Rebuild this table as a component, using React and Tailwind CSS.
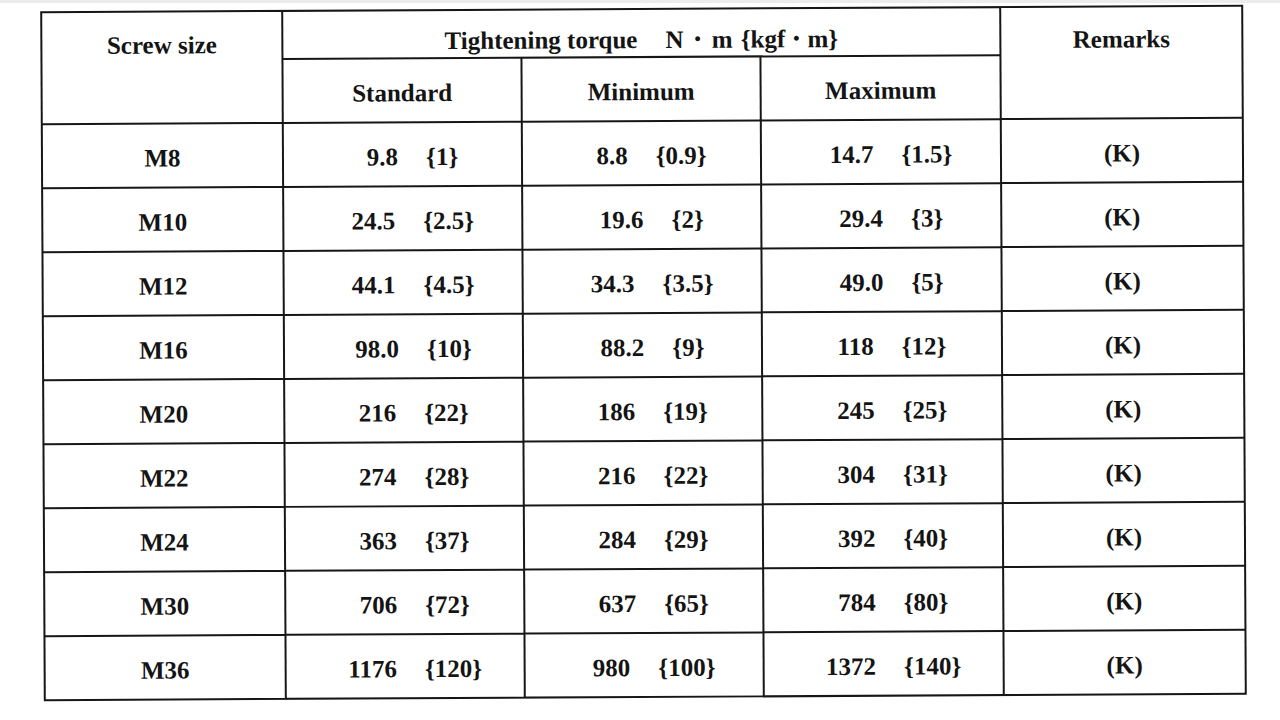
import React from 'react';

const rows = [
  { size: 'M8', std: ['9.8', '{1}'], min: ['8.8', '{0.9}'], max: ['14.7', '{1.5}'] },
  { size: 'M10', std: ['24.5', '{2.5}'], min: ['19.6', '{2}'], max: ['29.4', '{3}'] },
  { size: 'M12', std: ['44.1', '{4.5}'], min: ['34.3', '{3.5}'], max: ['49.0', '{5}'] },
  { size: 'M16', std: ['98.0', '{10}'], min: ['88.2', '{9}'], max: ['118', '{12}'] },
  { size: 'M20', std: ['216', '{22}'], min: ['186', '{19}'], max: ['245', '{25}'] },
  { size: 'M22', std: ['274', '{28}'], min: ['216', '{22}'], max: ['304', '{31}'] },
  { size: 'M24', std: ['363', '{37}'], min: ['284', '{29}'], max: ['392', '{40}'] },
  { size: 'M30', std: ['706', '{72}'], min: ['637', '{65}'], max: ['784', '{80}'] },
  { size: 'M36', std: ['1176', '{120}'], min: ['980', '{100}'], max: ['1372', '{140}'] },
];

const Value = ({ pair }) => (
  <div className="bg-white flex items-center justify-center gap-[28px] pl-[20px] pt-[4px]">
    <span>{pair[0]}</span>
    <span>{pair[1]}</span>
  </div>
);

const App = () => {
  return (
    <div
      className="w-[1280px] h-[720px] bg-white border-t-[3px] border-[#ececec] overflow-hidden text-[#141414] font-bold text-[25px] leading-none"
      style={{ fontFamily: '"Liberation Serif", "Times New Roman", serif' }}
    >
      <div className="ml-[42px] mt-[5px] w-fit -rotate-[0.3deg]">
        <div className="grid grid-cols-[239px_237px_237px_238px_240px] grid-rows-[46px_62px_repeat(9,62px)] gap-[2px] p-[2px] bg-[#161616]">
          <div className="row-span-2 bg-white flex justify-center pt-[20px]">Screw size</div>
          <div className="col-span-3 bg-white flex items-center justify-center gap-[28px] pt-[12px]">
            <span>Tightening torque</span>
            <span className="flex items-center">
              <span>N</span>
              <span className="mx-[11px] text-[18px]">•</span>
              <span>m</span>
              <span className="ml-[8px]">{'{'}kgf</span>
              <span className="mx-[8px] text-[18px]">•</span>
              <span>m{'}'}</span>
            </span>
          </div>
          <div className="row-span-2 bg-white flex justify-center pt-[19px]">Remarks</div>
          <div className="bg-white flex items-center justify-center pt-[4px]">Standard</div>
          <div className="bg-white flex items-center justify-center pt-[4px]">Minimum</div>
          <div className="bg-white flex items-center justify-center pt-[4px]">Maximum</div>

          {rows.map((r) => (
            <React.Fragment key={r.size}>
              <div className="bg-white flex items-center justify-center pt-[4px]">{r.size}</div>
              <Value pair={r.std} />
              <Value pair={r.min} />
              <Value pair={r.max} />
              <div className="bg-white flex items-center justify-center pt-[4px]">(K)</div>
            </React.Fragment>
          ))}
        </div>
      </div>
    </div>
  );
};

export default App;
